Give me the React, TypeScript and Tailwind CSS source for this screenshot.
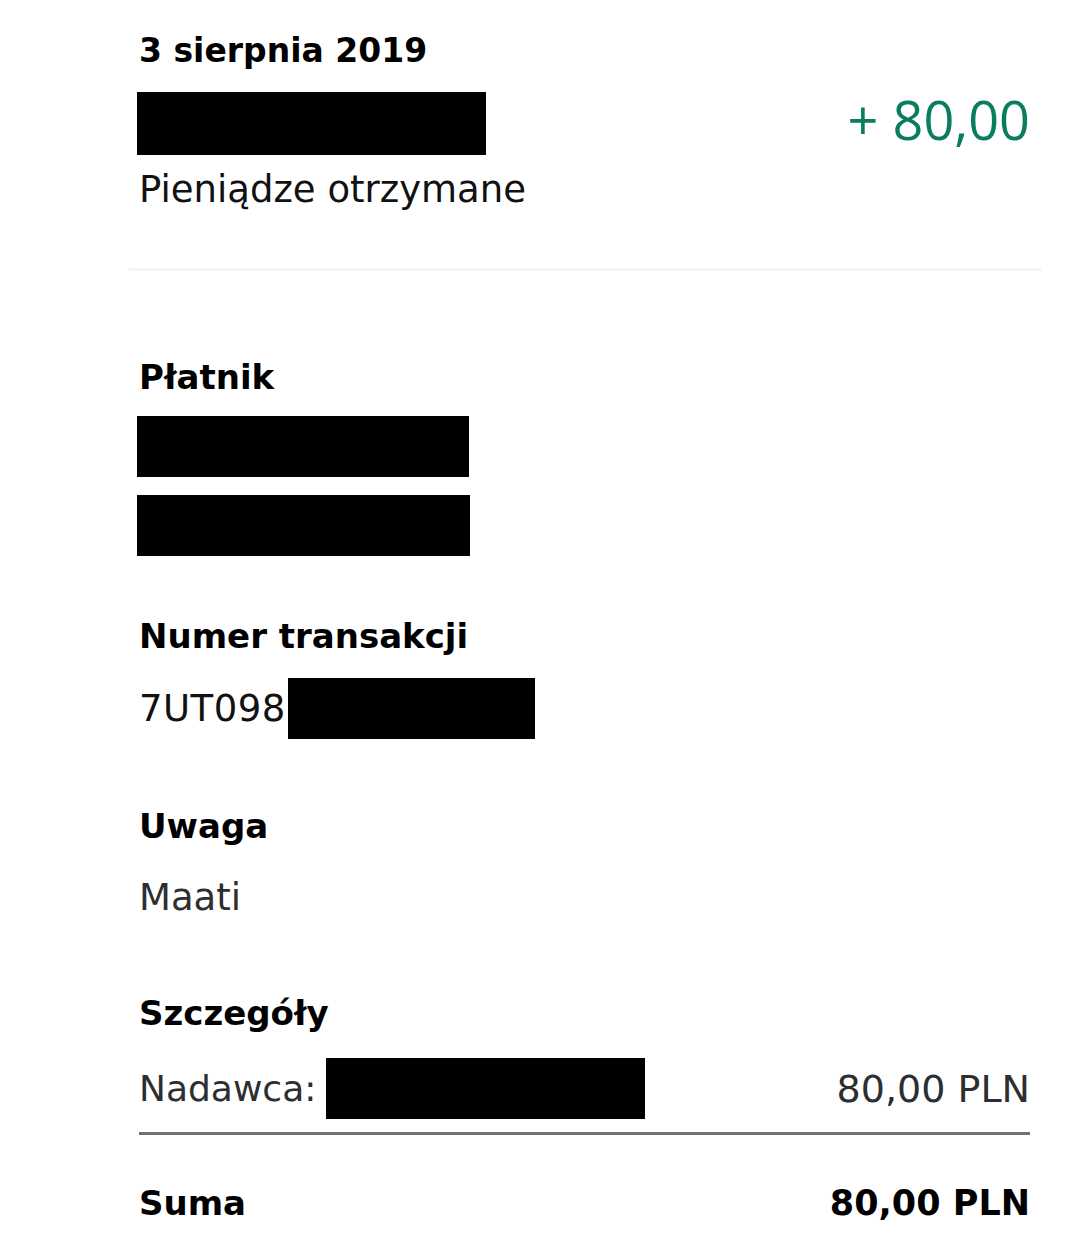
const sans = { fontFamily: '"DejaVu Sans", "Noto Sans", sans-serif' };

export default function App() {
  return (
    <div className="min-h-screen w-[1080px] bg-white text-black" style={sans}>
      {/* nagłówek transakcji */}
      <div className="pl-[139px] pr-[50px] pt-[31px]">
        <div className="flex justify-between items-start">
          <div>
            <h1 className="text-[33px] leading-[40px] font-bold">3 sierpnia 2019</h1>
            <div className="mt-[21px] -ml-[2px] w-[349px] h-[63px] bg-black" />
            <p className="mt-[13px] text-[37px] leading-[44px] text-[#111]">Pieniądze otrzymane</p>
          </div>
          <div
            className="pt-[58px] text-[54px] leading-[60px] text-[#0a7c5f]"
            style={{ fontFamily: '"Open Sans", sans-serif' }}
          >
            + 80,00
          </div>
        </div>
      </div>
      <div className="mt-[56px] ml-[129px] mr-[38px] h-[3px] bg-[#f4f5f7]" />

      <div className="pl-[139px] pr-[50px] pt-[86px]">
        <h2 className="text-[34px] leading-[40px] font-bold">Płatnik</h2>
        <div className="mt-[19px] -ml-[2px] w-[332px] h-[61px] bg-black" />
        <div className="mt-[18px] -ml-[2px] w-[333px] h-[61px] bg-black" />

        <h2 className="mt-[60px] text-[34px] leading-[40px] font-bold">Numer transakcji</h2>
        <div className="mt-[22px] flex items-center">
          <span className="text-[37px] leading-[44px] tracking-[0.5px] text-[#111]">7UT098</span>
          <div className="ml-[2px] w-[247px] h-[61px] bg-black" />
        </div>

        <h2 className="mt-[67px] text-[34px] leading-[40px] font-bold">Uwaga</h2>
        <p className="mt-[30px] text-[37px] leading-[44px] text-[#2c2e2f]">Maati</p>

        <h2 className="mt-[73px] text-[34px] leading-[40px] font-bold">Szczegóły</h2>
        <div className="mt-[25px] flex items-center justify-between">
          <div className="flex items-center">
            <span className="text-[36px] leading-[44px] text-[#2c2e2f]">Nadawca:</span>
            <div className="ml-[10px] w-[319px] h-[61px] bg-black" />
          </div>
          <span className="text-[38px] leading-[44px] text-[#2c2e2f]">80,00 PLN</span>
        </div>
        <div className="mt-[13px] h-[3px] bg-[#6c7378]" />
        <div className="mt-[48px] flex items-center justify-between">
          <span className="text-[34px] leading-[40px] font-bold">Suma</span>
          <span className="text-[35px] leading-[40px] font-bold">80,00 PLN</span>
        </div>
      </div>
    </div>
  );
}
